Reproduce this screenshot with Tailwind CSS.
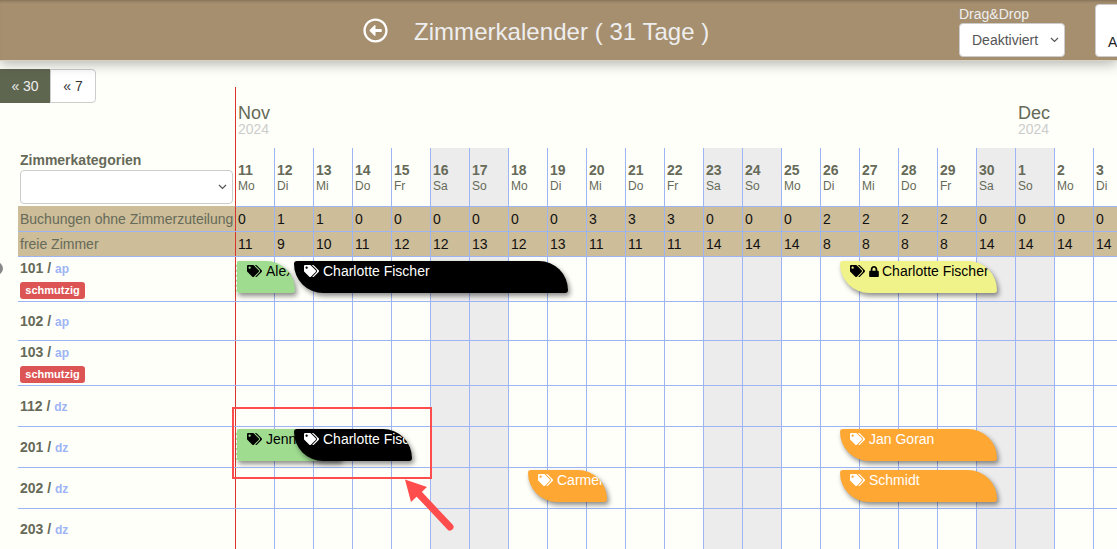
<!DOCTYPE html>
<html lang="de">
<head>
  <meta charset="UTF-8" />
  <title>Zimmerkalender</title>
  <script src="https://cdn.jsdelivr.net/npm/@tailwindcss/browser@4"></script>
</head>
<body class="relative h-[549px] w-[1117px] overflow-hidden bg-[#fffffa] font-['Liberation_Sans',Arial,sans-serif]">

  <!-- header bar -->
  <header class="relative z-20 flex h-[61px] items-start bg-[#a68f6f] shadow-[0_3px_12px_rgba(0,0,0,0.3),inset_0_3px_3px_-2px_rgba(0,0,0,0.25)] border-b border-[#d8d2c4]">
    <svg class="ml-[363px] mt-[18px] h-[25px] w-[25px] shrink-0" viewBox="0 0 512 512" fill="#fff"><path d="M8 256c0 137 111 248 248 248s248-111 248-248S393 8 256 8 8 119 8 256zm448 0c0 110.5-89.5 200-200 200S56 366.5 56 256 145.5 56 256 56s200 89.5 200 200zm-72-20v40c0 6.6-5.4 12-12 12H256v67c0 10.7-12.9 16-20.5 8.5l-99-99c-4.7-4.7-4.7-12.3 0-17l99-99c7.6-7.6 20.5-2.2 20.5 8.5v67h116c6.6 0 12 5.4 12 12z"/></svg>
    <h1 class="ml-[26px] mt-[18px] w-[545px] shrink-0 text-[24px] leading-[28px] tracking-[0.04px] text-[#eeeeee]">Zimmerkalender ( 31 Tage )</h1>
    <div class="w-[136px] shrink-0 pt-[5px]">
      <div class="text-[14px] leading-[18px] text-[#eeeeee]">Drag&amp;Drop</div>
      <div class="relative h-[34px] w-[106px]">
        <select class="h-[34px] w-[106px] appearance-none rounded-[4px] border border-[#ccc] bg-white pl-[12px] text-[14px] text-[#555]">
          <option>Deaktiviert</option>
        </select>
        <svg class="absolute right-[6px] top-[14px] h-[6px] w-[9px]" viewBox="0 0 9 6" fill="none" stroke="#555" stroke-width="1.2"><path d="M1 1l3.5 3.5L8 1"/></svg>
      </div>
    </div>
    <div class="mt-[4px] h-[53px] w-[40px] shrink-0 rounded-l-[4px] border border-[#ccc] bg-white pl-[12px] pt-[28px] text-[14px] leading-[18px] text-[#222]">An</div>
  </header>

  <!-- top of the calendar -->
  <div class="flex h-[145px]">
    <div class="w-[235px] shrink-0">
      <div class="mt-[8px] flex h-[34px] text-[14px]">
        <button class="w-[50px] bg-[#5f6650] text-[#eeeeee]">« 30</button>
        <button class="w-[46px] rounded-r-[4px] border border-[#ccc] bg-white text-[#333]">« 7</button>
      </div>
      <div class="ml-[20px] mt-[48px] text-[14px] font-bold leading-[18px] text-[#666a58]">Zimmerkategorien</div>
      <div class="relative ml-[20px] mt-[1px] h-[34px] w-[213px]">
        <select class="h-[34px] w-[213px] appearance-none rounded-[4px] border border-[#ccc] bg-white"></select>
        <svg class="absolute right-[6px] top-[14px] h-[6px] w-[9px]" viewBox="0 0 9 6" fill="none" stroke="#555" stroke-width="1.2"><path d="M1 1l3.5 3.5L8 1"/></svg>
      </div>
    </div>
    <div class="flex-1 overflow-hidden">
      <div class="mt-[26px] flex h-[61px] border-l border-[#d9342b] text-[#666a58]">
        <div class="w-[780px] shrink-0 pl-[2px] pt-[16px]"><div class="text-[18px] leading-[20px]">Nov</div><div class="text-[14px] leading-[12px] text-[#cccccc]">2024</div></div>
        <div class="w-[60px] shrink-0 pl-[2px] pt-[16px]"><div class="text-[18px] leading-[20px]">Dec</div><div class="text-[14px] leading-[12px] text-[#cccccc]">2024</div></div>
      </div>
      <div id="days" class="flex h-[58px]"></div>
    </div>
  </div>

  <!-- summary band -->
  <div class="relative ml-[18px] bg-[#cdbd99] text-[14px]">
    <div class="flex h-[26px] border-b border-[#9db4f5]">
      <div class="w-[217px] shrink-0 pl-[2px] pt-[4px] leading-[18px] whitespace-nowrap text-[#666a58]">Buchungen ohne Zimmerzuteilung</div>
      <div id="unassigned" class="flex shrink-0"></div>
    </div>
    <div class="flex h-[25px] border-b border-[#9db4f5]">
      <div class="w-[217px] shrink-0 pl-[2px] pt-[3px] leading-[18px] text-[#666a58]">freie Zimmer</div>
      <div id="free" class="flex shrink-0"></div>
    </div>
  </div>

  <!-- rooms -->
  <div id="rooms" class="ml-[18px]"></div>

  <div class="absolute left-[-10px] top-[262px] h-[13px] w-[13px] rounded-full bg-[#888]"></div>

  <!-- annotation -->
  <div class="absolute left-[232px] top-[407px] z-30 h-[72px] w-[200px] border-2 border-[#ff4d4d]"></div>
  <svg class="absolute left-[400px] top-[474px] z-30 h-[62px] w-[62px]" viewBox="0 0 62 62">
    <path d="M50 53L19 20" stroke="#ff4d4d" stroke-width="7" stroke-linecap="round" fill="none"/>
    <path d="M5 5.500L27 13L11 28Z" fill="#ff4d4d"/>
  </svg>

  <script>
    const TAGS = 'M497.941 225.941L286.059 14.059A48 48 0 0 0 252.118 0H48C21.49 0 0 21.49 0 48v204.118a48 48 0 0 0 14.059 33.941l211.882 211.882c18.744 18.745 49.136 18.746 67.882 0l204.118-204.118c18.745-18.745 18.745-49.137 0-67.882zM112 160c-26.51 0-48-21.49-48-48s21.49-48 48-48 48 21.49 48 48-21.49 48-48 48zm513.941 133.823L421.823 497.941c-18.745 18.745-49.137 18.745-67.882 0l-.36-.36L527.64 323.522c16.999-16.999 26.36-39.6 26.36-63.64s-9.362-46.641-26.36-63.64L331.397 0h48.721a48 48 0 0 1 33.941 14.059l211.882 211.882c18.745 18.745 18.745 49.137 0 67.882z';
    const LOCK = 'M400 224h-24v-72C376 68.2 307.8 0 224 0S72 68.2 72 152v72H48c-26.5 0-48 21.5-48 48v192c0 26.5 21.5 48 48 48h352c26.5 0 48-21.5 48-48V272c0-26.5-21.5-48-48-48zm-104 0H152v-72c0-39.7 32.3-72 72-72s72 32.3 72 72v72z';

    const days = [[11,'Mo'],[12,'Di'],[13,'Mi'],[14,'Do'],[15,'Fr'],[16,'Sa'],[17,'So'],[18,'Mo'],[19,'Di'],[20,'Mi'],[21,'Do'],[22,'Fr'],[23,'Sa'],[24,'So'],[25,'Mo'],[26,'Di'],[27,'Mi'],[28,'Do'],[29,'Fr'],[30,'Sa'],[1,'So'],[2,'Mo'],[3,'Di']];
    const unassigned = [0,1,1,0,0,0,0,0,0,3,3,3,0,0,0,2,2,2,2,0,0,0,0];
    const free = [11,9,10,11,12,12,13,12,13,11,11,11,14,14,14,8,8,8,8,14,14,14,14];

    const rooms = [
      { no: 101, type: 'ap', h: 'h-[45px]', top: 4, dirty: true, bookings: [
        { x: 236, w: 59, name: 'Alexandra', look: 'green' },
        { x: 294, w: 274, name: 'Charlotte Fischer', look: 'black' },
        { x: 840, w: 157, name: 'Charlotte Fischer', look: 'yellow' } ] },
      { no: 102, type: 'ap', h: 'h-[39px]', bookings: [] },
      { no: 103, type: 'ap', h: 'h-[45px]', dirty: true, bookings: [] },
      { no: 112, type: 'dz', h: 'h-[41px]', bookings: [] },
      { no: 201, type: 'dz', h: 'h-[41px]', top: 2, bookings: [
        { x: 236, w: 105, name: 'Jennifer Weber', look: 'green' },
        { x: 294, w: 118, name: 'Charlotte Fischer', look: 'black' },
        { x: 840, w: 157, name: 'Jan Goran', look: 'orange' } ] },
      { no: 202, type: 'dz', h: 'h-[41px]', top: 2, bookings: [
        { x: 528, w: 79, name: 'Carmen Ruiz', look: 'orange' },
        { x: 840, w: 157, name: 'Schmidt', look: 'orange' } ] },
      { no: 203, type: 'dz', h: 'h-[41px]', bookings: [] },
    ];

    const looks = {
      green: 'bg-[#9fdc90] text-black rounded-[3px_30px_3px_3px] border-l border-dashed border-white pl-[10px]',
      black: 'bg-black text-white rounded-[3px_30px_3px_30px] pl-[10px] pr-[3px] z-10',
      yellow: 'bg-[#f0f28a] text-black rounded-[3px_30px_3px_30px] pl-[10px]',
      orange: 'bg-[#ffa733] text-white rounded-[3px_30px_3px_30px] pl-[10px] pr-[3px]',
    };

    function isWeekend(i) { return days[i][1] === 'Sa' || days[i][1] === 'So'; }
    function lineClass(i) { return i === 0 ? 'border-l border-[#d9342b]' : 'border-l border-[#9db4f5]'; }

    document.getElementById('days').innerHTML = days.map((d, i) => `
      <div class="h-[58px] w-[39px] shrink-0 pl-[2px] pt-[14px] ${lineClass(i)} ${isWeekend(i) ? 'bg-[#ececec]' : ''}">
        <div class="text-[14px] font-bold leading-[16px] text-[#666a58]">${d[0]}</div>
        <div class="text-[12px] leading-[16px] text-[#666a58]">${d[1]}</div>
      </div>`).join('');

    document.getElementById('unassigned').innerHTML = unassigned.map((v, i) =>
      `<div class="w-[39px] shrink-0 border-t border-t-[#9db4f5] pl-[2px] pt-[3px] leading-[18px] text-[#111] ${lineClass(i)}">${v}</div>`).join('');
    document.getElementById('free').innerHTML = free.map((v, i) =>
      `<div class="w-[39px] shrink-0 pl-[2px] pt-[3px] leading-[18px] text-[#111] ${lineClass(i)}">${v}</div>`).join('');

    function bookingHtml(b, top) {
      const lock = b.look === 'yellow'
        ? `<svg class="mr-[3px] h-[11px] w-[10px] shrink-0" viewBox="0 0 448 512" fill="currentColor"><path d="${LOCK}"/></svg>` : '';
      return `<div class="absolute flex h-[32px] items-start overflow-hidden text-[14px] leading-[20px] shadow-[2px_3px_5px_rgba(0,0,0,0.45)] ${looks[b.look]}" style="left:${b.x - 235}px;top:${top}px;width:${b.w}px">
        <div class="flex h-[20px] w-full items-center overflow-hidden whitespace-nowrap">
          <svg class="mr-[4px] h-[12px] w-[15px] shrink-0" viewBox="0 0 640 512" fill="currentColor"><path d="${TAGS}"/></svg>${lock}<span>${b.name}</span>
        </div>
      </div>`;
    }

    document.getElementById('rooms').innerHTML = rooms.map(r => `
      <div class="flex ${r.h} border-b border-[#9db4f5]">
        <div class="flex w-[217px] shrink-0 flex-col justify-center pl-[2px]">
          <div class="text-[14px] font-bold leading-[16px] text-[#666a58]">${r.no} / <span class="text-[12px] text-[#9db4f5]">${r.type}</span></div>
          ${r.dirty ? '<div class="mt-[5px] flex h-[17px] w-[65px] items-center justify-center rounded-[3px] bg-[#dc5454] text-[11px] font-bold text-white">schmutzig</div>' : ''}
        </div>
        <div class="relative flex shrink-0">
          ${days.map((d, i) => `<div class="w-[39px] shrink-0 ${lineClass(i)} ${isWeekend(i) ? 'bg-[#ececec]' : ''}"></div>`).join('')}
          ${r.bookings.map(b => bookingHtml(b, r.top)).join('')}
        </div>
      </div>`).join('');
  </script>
</body>
</html>
